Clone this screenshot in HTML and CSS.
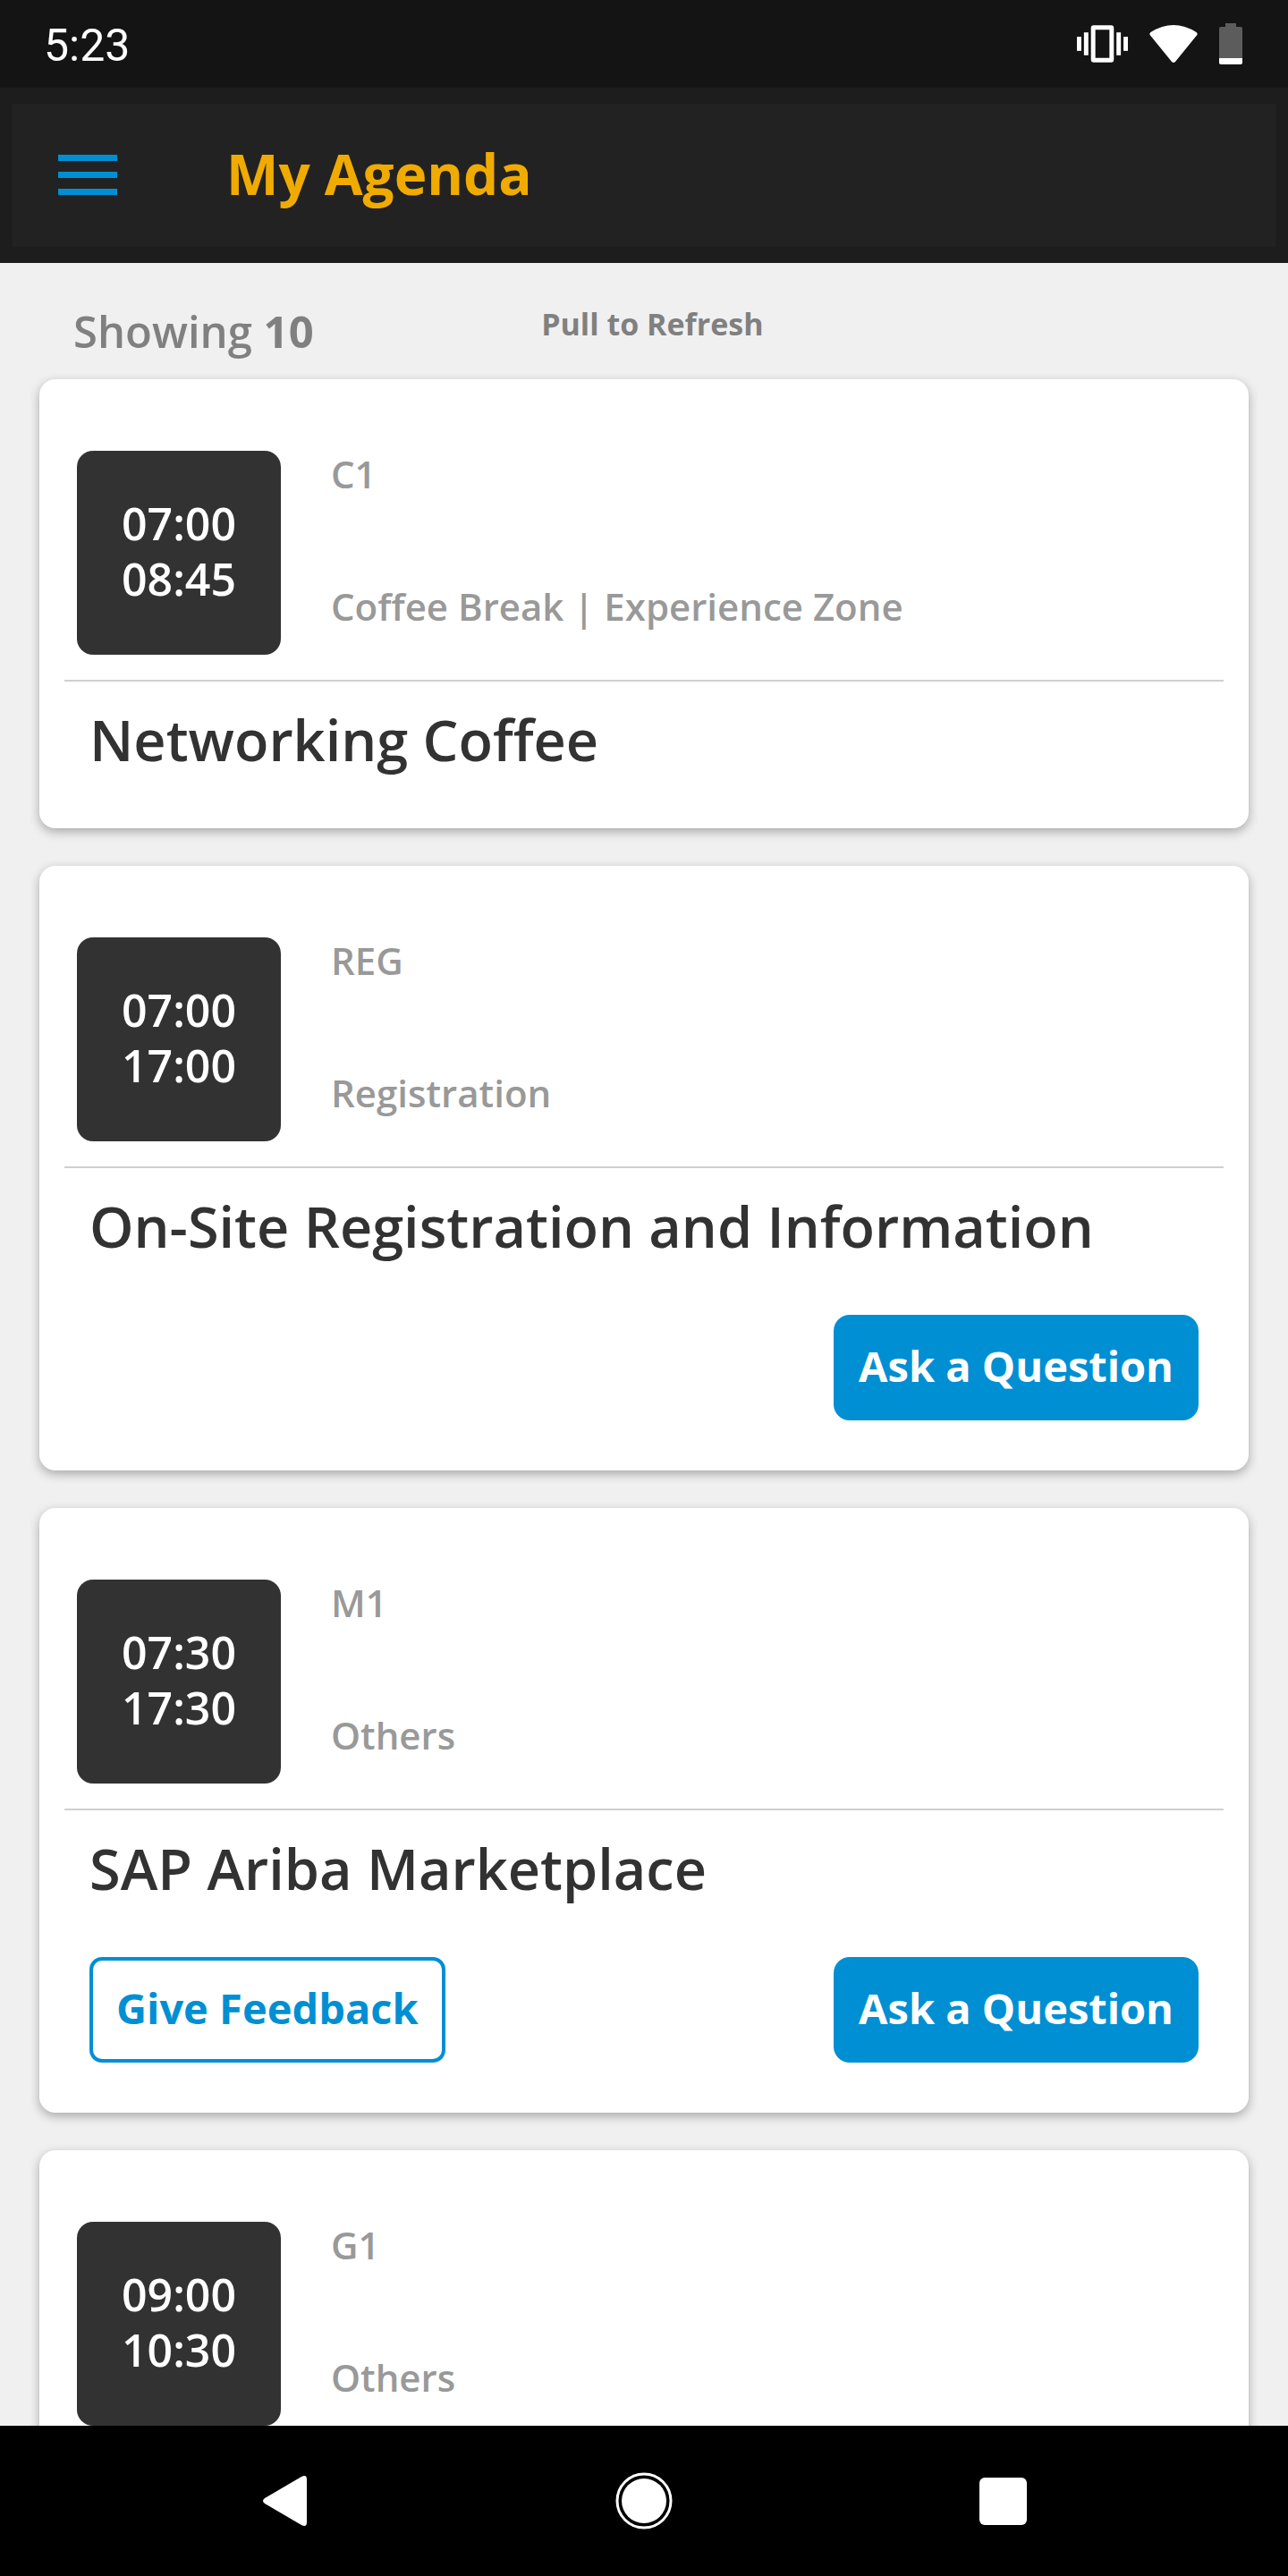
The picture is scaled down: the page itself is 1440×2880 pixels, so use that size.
FILE: index.html
```html
<!DOCTYPE html>
<html lang="en">

<head>
    <meta charset="UTF-8">
    <meta name="viewport" content="width=device-width, initial-scale=1.0">
    <title>My Agenda</title>
    <link rel="stylesheet" href="styles.css">
</head>

<body>

    <div class="status-bar">
        <span class="clock">5:23</span>
        <div class="status-icons">
            <svg width="57" height="42" viewBox="0 0 58 42" fill="#fff">
                <rect x="0" y="13" width="5" height="16"/>
                <rect x="8" y="8" width="5" height="26"/>
                <path fill-rule="evenodd" d="M19 0h20a3 3 0 0 1 3 3v36a3 3 0 0 1-3 3H19a3 3 0 0 1-3-3V3a3 3 0 0 1 3-3zM21 5v32h16V5z"/>
                <rect x="45" y="8" width="5" height="26"/>
                <rect x="53" y="13" width="5" height="16"/>
            </svg>
            <svg width="54" height="44" viewBox="0 0 54 44" fill="#fff">
                <path d="M1.500 9Q27-7 52.500 9Q54.500 10.500 53 12.500L29 42Q27 44 25 42L1 12.500Q-.5 10.500 1.500 9z"/>
            </svg>
            <svg width="26" height="46" viewBox="0 0 26 46">
                <path d="M7 0h12v4h5a2 2 0 0 1 2 2v33H0V6a2 2 0 0 1 2-2h5z" fill="#5c5c5c"/>
                <path d="M0 39h26v5a2 2 0 0 1-2 2H2a2 2 0 0 1-2-2z" fill="#fff"/>
            </svg>
        </div>
    </div>

    <header class="app-header">
        <button class="menu-button" aria-label="Menu">
            <svg width="66" height="46" viewBox="0 0 66 46" fill="#008fd3">
                <rect y="0" width="66" height="7"/>
                <rect y="19" width="66" height="7"/>
                <rect y="38" width="66" height="7"/>
            </svg>
        </button>
        <h1>My Agenda</h1>
    </header>

    <main>
        <div class="list-info">
            <p class="count">Showing <b>10</b></p>
            <p class="refresh">Pull to Refresh</p>
        </div>

        <article class="card">
            <div class="card-top">
                <div class="time"><span>07:00</span><span>08:45</span></div>
                <div class="details">
                    <p>C1</p>
                    <p>Coffee Break | Experience Zone</p>
                </div>
            </div>
            <h2>Networking Coffee</h2>
        </article>

        <article class="card">
            <div class="card-top">
                <div class="time"><span>07:00</span><span>17:00</span></div>
                <div class="details">
                    <p>REG</p>
                    <p>Registration</p>
                </div>
            </div>
            <h2>On-Site Registration and Information</h2>
            <div class="actions">
                <button class="ask">Ask a Question</button>
            </div>
        </article>

        <article class="card">
            <div class="card-top">
                <div class="time"><span>07:30</span><span>17:30</span></div>
                <div class="details">
                    <p>M1</p>
                    <p>Others</p>
                </div>
            </div>
            <h2>SAP Ariba Marketplace</h2>
            <div class="actions">
                <button class="feedback">Give Feedback</button>
                <button class="ask">Ask a Question</button>
            </div>
        </article>

        <article class="card">
            <div class="card-top">
                <div class="time"><span>09:00</span><span>10:30</span></div>
                <div class="details">
                    <p>G1</p>
                    <p>Others</p>
                </div>
            </div>
        </article>
    </main>

    <nav class="nav-bar">
        <button aria-label="Back">
            <svg width="50" height="56" viewBox="0 0 50 56" fill="#fff">
                <path d="M2 25L43 1Q49-2 49 4V52Q49 58 43 55L2 31Q-2 28 2 25z"/>
            </svg>
        </button>
        <button aria-label="Home">
            <svg width="64" height="64" viewBox="0 0 64 64" fill="#fff">
                <circle cx="32" cy="32" r="30" fill="none" stroke="#fff" stroke-width="3"/>
                <circle cx="32" cy="32" r="25"/>
            </svg>
        </button>
        <button aria-label="Recent apps">
            <svg width="53" height="53" viewBox="0 0 54 54" fill="#fff">
                <rect width="54" height="54" rx="6"/>
            </svg>
        </button>
    </nav>

</body>

</html>
```
FILE: styles.css
```css
* {
    box-sizing: border-box;
}

body {
    margin: 0;
    height: 100vh;
    display: flex;
    flex-direction: column;
    background-color: #f0f0f0;
    font-family: "Open Sans", "Noto Sans", sans-serif;
}

h1, h2, p {
    margin: 0;
}

button {
    padding: 0;
    border: none;
    background: none;
    font-family: inherit;
    cursor: pointer;
}

svg {
    display: block;
}

.status-bar {
    display: flex;
    flex: none;
    align-items: center;
    justify-content: space-between;
    height: 98px;
    padding: 0 51px 0 49px;
    background-color: #141414;
}

.clock {
    padding-top: 4px;
    color: white;
    font-family: Roboto, sans-serif;
    font-size: 50px;
    line-height: 62px;
}

.status-icons {
    display: flex;
    align-items: center;
    gap: 24px;
}

.app-header {
    display: flex;
    flex: none;
    align-items: center;
    gap: 122px;
    height: 196px;
    padding: 0 51px;
    border: solid #1d1d1d;
    border-width: 18px 14px;
    background-color: #222;
}

h1 {
    padding-bottom: 4px;
    color: #f0ab00;
    font-size: 62px;
    font-weight: 700;
    line-height: 86px;
}

main {
    flex: 1;
    min-height: 0;
    padding: 0 44px;
    overflow: hidden;
}

.list-info {
    display: grid;
    grid-template-columns: 41% auto;
    height: 130px;
    padding: 42px 38px 0;
    color: #808080;
    font-weight: 600;
}

.count {
    font-size: 49px;
    line-height: 68px;
}

.count b {
    font-weight: 700;
}

.refresh {
    font-size: 34px;
    font-weight: 700;
    line-height: 52px;
}

.card {
    margin-bottom: 42px;
    padding: 80px 28px 56px;
    border-radius: 18px;
    background-color: white;
    box-shadow: 0 4px 12px rgba(0, 0, 0, 0.3);
}

.card-top {
    display: flex;
    gap: 56px;
    padding: 0 14px 28px;
    border-bottom: 2px solid #d0d0d0;
}

.time {
    display: flex;
    flex: none;
    flex-direction: column;
    align-items: center;
    justify-content: center;
    width: 228px;
    height: 228px;
    padding-bottom: 4px;
    border-radius: 18px;
    background-color: #323232;
    color: white;
    font-size: 50px;
    font-weight: 600;
    line-height: 62px;
}

.details {
    display: flex;
    flex-direction: column;
    justify-content: space-between;
    height: 200px;
    color: #999;
    font-size: 42px;
    font-weight: 600;
    line-height: 52px;
}

h2 {
    padding: 22px 28px 0;
    color: #323232;
    font-size: 63px;
    font-weight: 600;
    line-height: 86px;
}

.actions {
    display: flex;
    justify-content: space-between;
    padding: 56px 28px 0;
}

.actions button {
    height: 118px;
    padding: 0 28px 4px;
    border-radius: 18px;
    font-size: 47px;
    font-weight: 700;
}

.actions .ask {
    margin-left: auto;
    background-color: #008fd3;
    color: white;
}

.actions .feedback {
    padding: 0 26px 4px;
    border: 4px solid #008fd3;
    border-radius: 14px;
    color: #008fd3;
}

.nav-bar {
    display: grid;
    flex: none;
    grid-template-columns: repeat(3, 1fr);
    height: 168px;
    padding: 0 118px;
    background-color: black;
}

.nav-bar button {
    display: flex;
    align-items: center;
    justify-content: center;
}
```
